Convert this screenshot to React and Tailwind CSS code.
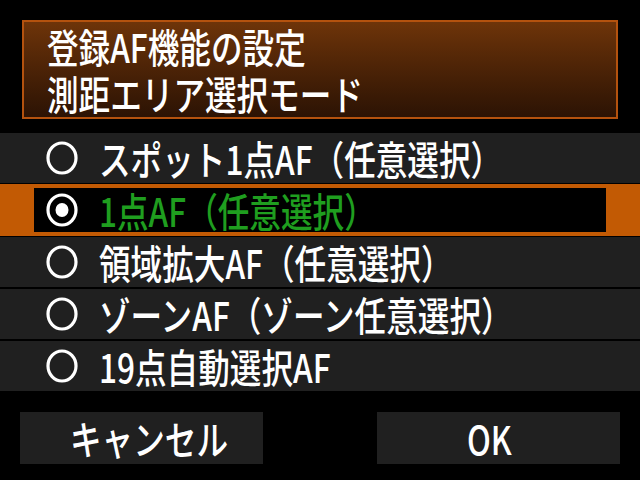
import { useState } from 'react';

const MODES = [
  { id: 'spot', label: 'スポット1点AF（任意選択）', gap: 'mt-[14px]' },
  { id: 'single', label: '1点AF（任意選択）', gap: 'mt-[1px]' },
  { id: 'expand', label: '領域拡大AF（任意選択）', gap: 'mt-[1px]' },
  { id: 'zone', label: 'ゾーンAF（ゾーン任意選択）', gap: 'mt-[2px]' },
  { id: 'auto', label: '19点自動選択AF', gap: 'mt-[2px]' },
];

const FONT = { fontFamily: '"Noto Sans CJK JP", "Noto Sans", sans-serif' };

// camera menus use a narrow face, so squeeze the CJK glyphs horizontally
const Squeezed = ({ children, className = '' }) => (
  <span className={`inline-block whitespace-nowrap font-medium scale-x-[0.79] ${className}`}>{children}</span>
);

const Radio = ({ checked }) => (
  <svg width="32" height="34" viewBox="0 0 32 34" className="shrink-0">
    <ellipse cx="16" cy="17" rx="14" ry="15" fill="none" stroke="white" strokeWidth="3.2" />
    {checked && <ellipse cx="16" cy="17" rx="6.5" ry="7" fill="white" />}
  </svg>
);

const ModeRow = ({ mode, selected, onPick }) => {
  if (selected) {
    return (
      <div className={`${mode.gap} h-[52px] bg-[#c25a04] px-[34px] py-[4px]`}>
        <div className="h-full bg-black flex items-center pl-[12px]">
          <Radio checked />
          <Squeezed className="origin-left ml-[21px] text-[40px] leading-none text-[#1f9e1f]">
            {mode.label}
          </Squeezed>
        </div>
      </div>
    );
  }
  return (
    <button
      onClick={() => onPick(mode.id)}
      className={`${mode.gap} h-[50px] bg-[#202020] flex items-center pl-[46px] text-left`}
    >
      <Radio />
      <Squeezed className="origin-left ml-[21px] text-[40px] leading-none text-white">
        {mode.label}
      </Squeezed>
    </button>
  );
};

export default function App() {
  const [mode, setMode] = useState('single');

  return (
    <div className="w-[640px] h-[480px] bg-black flex flex-col overflow-hidden" style={FONT}>
      {/* title box */}
      <div className="mt-[20px] mx-[22px] h-[99px] border-2 border-[#b4520e] bg-gradient-to-b from-[#6e3409] to-[#2c1304] flex flex-col justify-center pl-[23px]">
        <Squeezed className="origin-left text-[40px] leading-[47px] text-white">登録AF機能の設定</Squeezed>
        <Squeezed className="origin-left text-[40px] leading-[47px] text-white">測距エリア選択モード</Squeezed>
      </div>

      {/* mode list */}
      <div className="flex flex-col">
        {MODES.map((m) => (
          <ModeRow key={m.id} mode={m} selected={m.id === mode} onPick={setMode} />
        ))}
      </div>

      {/* bottom buttons */}
      <div className="mt-[21px] px-[20px] flex justify-between">
        <button className="w-[243px] h-[52px] bg-[#202020] flex items-center justify-center pl-[14px]">
          <Squeezed className="origin-center text-[40px] leading-none text-white">キャンセル</Squeezed>
        </button>
        <button className="w-[243px] h-[52px] bg-[#202020] flex items-center justify-center pr-[19px]">
          <Squeezed className="origin-center text-[40px] leading-none text-white">OK</Squeezed>
        </button>
      </div>
    </div>
  );
}
